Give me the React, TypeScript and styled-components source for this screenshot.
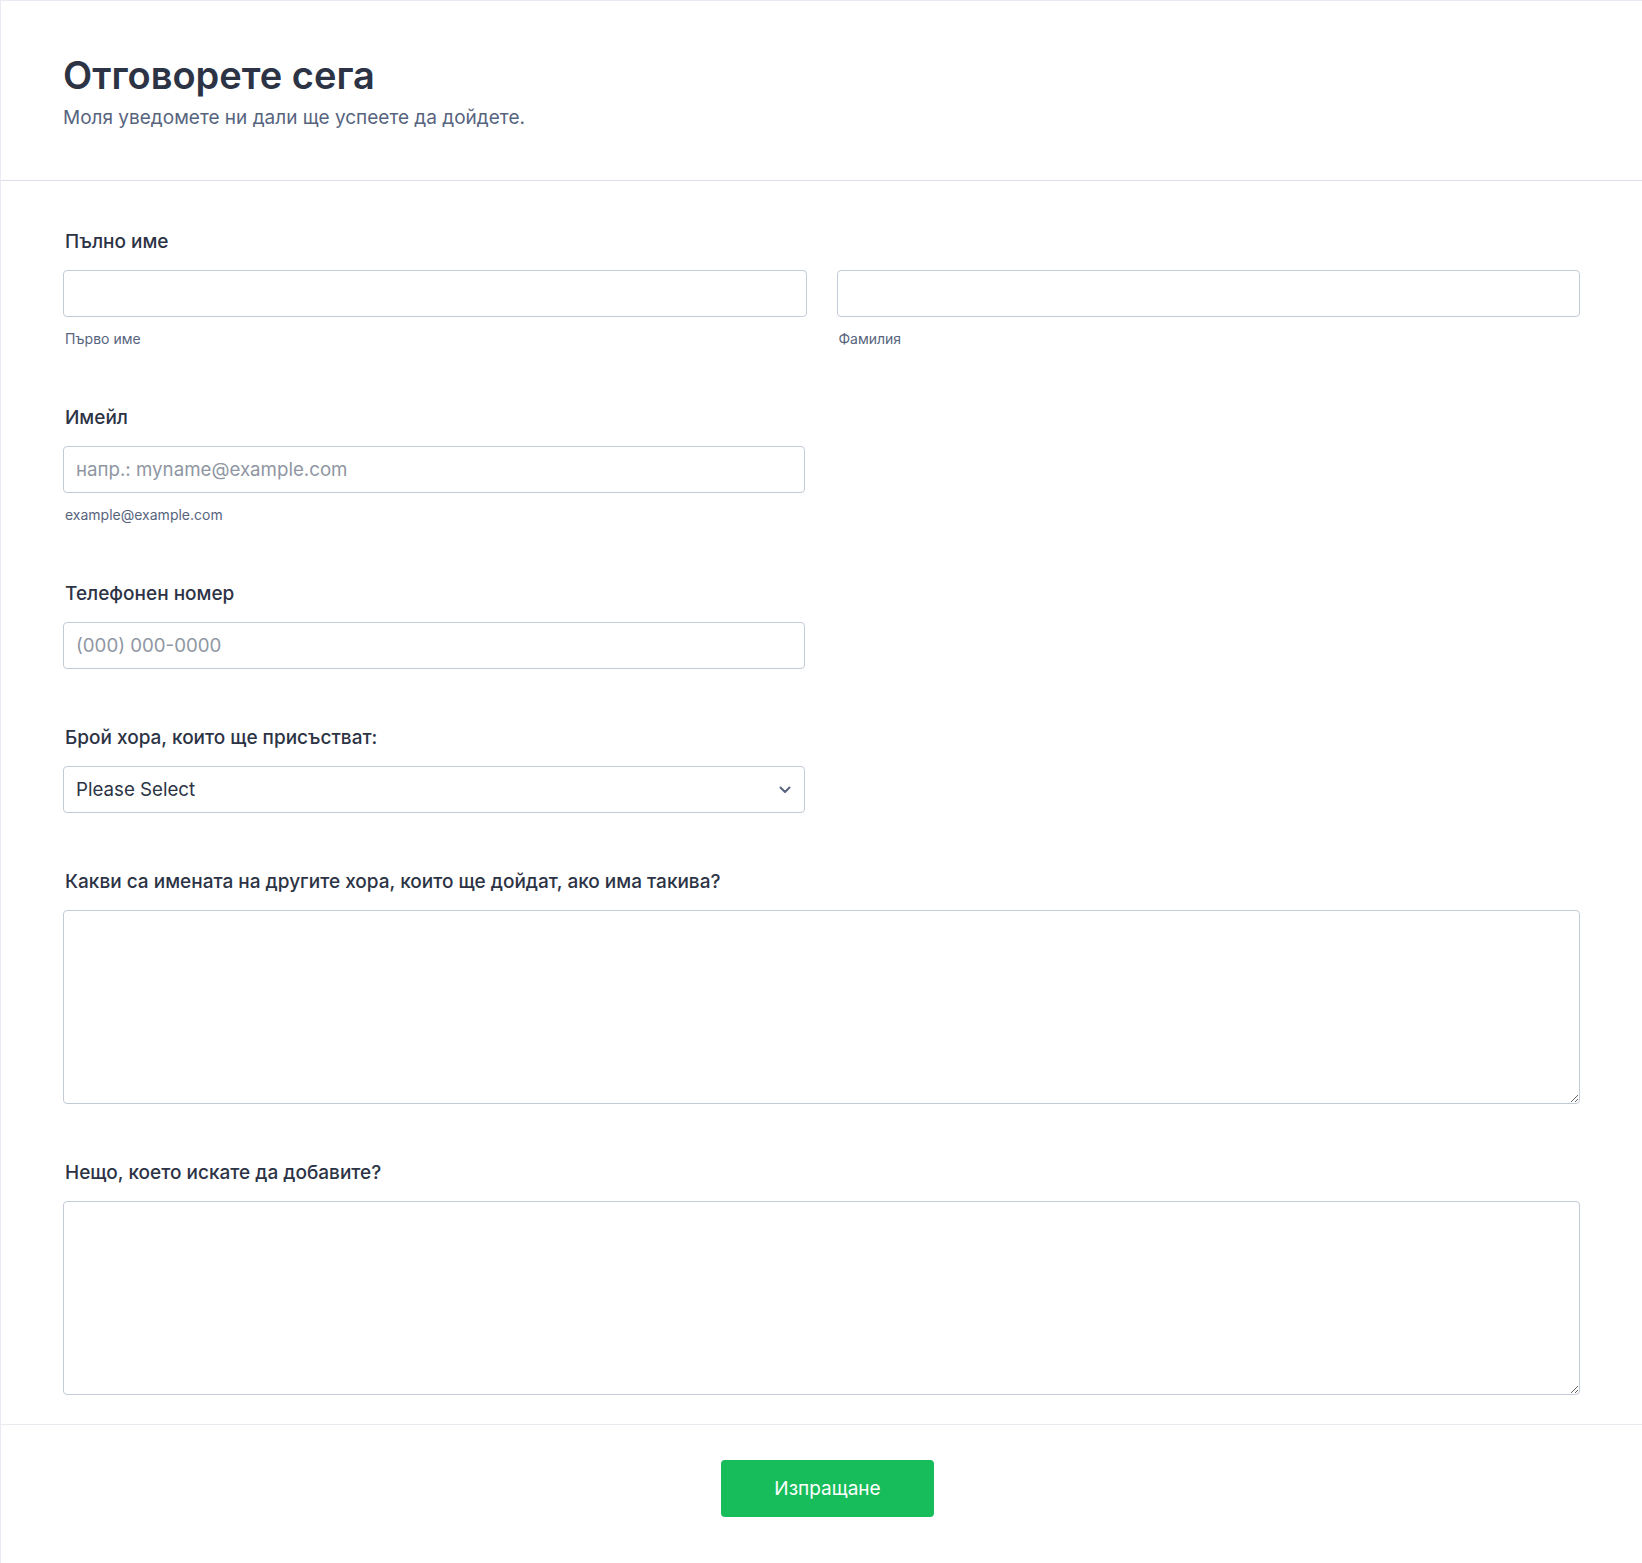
import styled, { createGlobalStyle } from 'styled-components';

const GlobalStyle = createGlobalStyle`
	html,
	body {
		margin: 0;
		padding: 0;
		background: #ffffff;
	}

	body {
		font-family: Inter, 'Noto Sans', 'Liberation Sans', sans-serif;
		color: #2c3345;
	}

	*,
	*::before,
	*::after {
		box-sizing: border-box;
	}
`;

const Card = styled.form`
	border-left: 1px solid #eaebf2;
	border-top: 1px solid #eaebf2;
	background: #ffffff;
	min-height: 1563px;
`;

const Header = styled.header`
	padding: 48px 62px 49px;
	border-bottom: 1px solid #dcdfe8;
`;

const Title = styled.h1`
	margin: 0;
	font-size: 38px;
	line-height: 52px;
	font-weight: 600;
	color: #2c3345;
`;

const Subtitle = styled.p`
	margin: 3px 0 0;
	font-size: 19px;
	line-height: 27px;
	font-weight: 400;
	color: #57647e;
`;

const Body = styled.div`
	padding: 22px 62px 0;
	display: flex;
	flex-direction: column;
`;

const Field = styled.div<{ $last?: boolean }>`
	padding: 25px 0 ${({ $last }) => ($last ? '29px' : '30px')};
	display: flex;
	flex-direction: column;
`;

const Label = styled.label`
	padding-left: 2px;
	font-size: 19px;
	line-height: 27px;
	font-weight: 500;
	color: #2c3345;
	margin-bottom: 15px;
`;

const Columns = styled.div`
	display: grid;
	grid-template-columns: 1fr 1fr;
	gap: 30px;
`;

const Half = styled.div`
	width: calc((100% - 34px) / 2);
	position: relative;
`;

const Column = styled.div`
	display: flex;
	flex-direction: column;
`;

const TextInput = styled.input`
	width: 100%;
	height: 47px;
	padding: 0 12px;
	border: 1px solid #c3cad8;
	border-radius: 4px;
	font-family: inherit;
	font-size: 18.7px;
	color: #2c3345;
	background: #ffffff;
	outline: none;

	&::placeholder {
		color: #8f96a3;
	}
`;

const Select = styled.select`
	width: 100%;
	height: 47px;
	padding: 0 40px 0 12px;
	border: 1px solid #c3cad8;
	border-radius: 4px;
	font-family: inherit;
	font-size: 18.7px;
	color: #2c3345;
	background: #ffffff;
	appearance: none;
	outline: none;
`;

const Chevron = styled.svg`
	position: absolute;
	right: 14px;
	top: 50%;
	transform: translateY(-50%);
	pointer-events: none;
`;

const TextArea = styled.textarea`
	width: 100%;
	height: 194px;
	padding: 10px 12px;
	border: 1px solid #c3cad8;
	border-radius: 4px;
	font-family: inherit;
	font-size: 18px;
	color: #2c3345;
	resize: vertical;
	outline: none;
	display: block;
`;

const SubLabel = styled.span`
	margin-top: 12px;
	padding-left: 2px;
	font-size: 14px;
	line-height: 20px;
	color: #57647e;
`;

const Footer = styled.div`
	border-top: 1px solid #eaebf0;
	padding: 35px 62px 45px 74px;
	display: flex;
	justify-content: center;
`;

const SubmitButton = styled.button`
	height: 57px;
	padding: 0 53px;
	border: none;
	border-radius: 4px;
	background: #18bd5b;
	color: #ffffff;
	font-family: inherit;
	font-size: 19px;
	font-weight: 400;
	cursor: pointer;
`;

export default function App() {
	return (
		<>
			<GlobalStyle />
			<Card onSubmit={(e) => e.preventDefault()}>
				<Header>
					<Title>Отговорете сега</Title>
					<Subtitle>Моля уведомете ни дали ще успеете да дойдете.</Subtitle>
				</Header>
				<Body>
					<Field>
						<Label>Пълно име</Label>
						<Columns>
							<Column>
								<TextInput type="text" />
								<SubLabel>Първо име</SubLabel>
							</Column>
							<Column>
								<TextInput type="text" />
								<SubLabel>Фамилия</SubLabel>
							</Column>
						</Columns>
					</Field>
					<Field>
						<Label>Имейл</Label>
						<Half>
							<TextInput type="email" placeholder="напр.: myname@example.com" />
						</Half>
						<SubLabel>example@example.com</SubLabel>
					</Field>
					<Field>
						<Label>Телефонен номер</Label>
						<Half>
							<TextInput type="tel" placeholder="(000) 000-0000" />
						</Half>
					</Field>
					<Field>
						<Label>Брой хора, които ще присъстват:</Label>
						<Half>
							<Select defaultValue="">
								<option value="">Please Select</option>
								<option value="1">1</option>
								<option value="2">2</option>
								<option value="3">3</option>
							</Select>
							<Chevron width="12" height="8" viewBox="0 0 12 8" fill="none">
								<path d="M1.5 1.5 6 6l4.5-4.5" stroke="#57647e" strokeWidth="2" strokeLinecap="round" strokeLinejoin="round" />
							</Chevron>
						</Half>
					</Field>
					<Field>
						<Label>Какви са имената на другите хора, които ще дойдат, ако има такива?</Label>
						<TextArea />
					</Field>
					<Field $last>
						<Label>Нещо, което искате да добавите?</Label>
						<TextArea />
					</Field>
				</Body>
				<Footer>
					<SubmitButton type="submit">Изпращане</SubmitButton>
				</Footer>
			</Card>
		</>
	);
}
